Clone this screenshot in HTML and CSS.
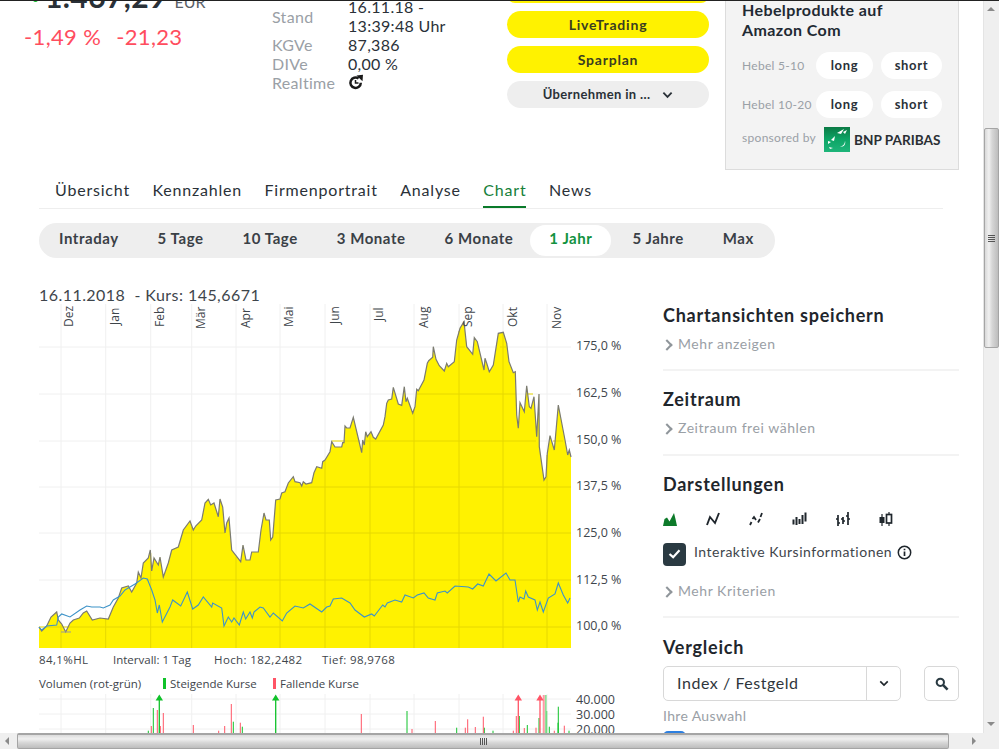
FILE: index.html
```html
<!DOCTYPE html>
<html lang="de">
<head>
<meta charset="utf-8">
<title>Amazon Com Chart</title>
<link rel="stylesheet" href="styles.css">
</head>
<body>
<div class="window">
  <div class="viewport">
    <main class="page">
      <section class="top">
        <div class="quote">
          <div class="price"><span class="dot"></span><b>1.467,29</b> <span class="cur">EUR</span></div>
          <div class="change"><span>-1,49 %</span><span>-21,23</span></div>
        </div>
        <dl class="facts">
          <dt>Stand</dt><dd>16.11.18 -<br>13:39:48 Uhr</dd>
          <dt>KGVe</dt><dd>87,386</dd>
          <dt>DIVe</dt><dd>0,00 %</dd>
          <dt>Realtime</dt>
          <dd><svg class="rt" viewBox="0 0 16 16" width="16" height="16"><path d="M12.800 8.800a5.200 5.200 0 1 1-2.200-4.300" fill="none" stroke="#1a1a1a" stroke-width="2.500"/><path d="M8.500 1.500 15 .8l-.5 6.500z" fill="#1a1a1a"/><path d="M7.500 6v3h3" fill="none" stroke="#1a1a1a" stroke-width="1.500"/></svg></dd>
        </dl>
        <div class="actions">
          <a class="btn yellow clipped"></a>
          <a class="btn yellow">LiveTrading</a>
          <a class="btn yellow">Sparplan</a>
          <a class="btn grey">Übernehmen in ...<svg class="chev" viewBox="0 0 12 8" width="11" height="8"><path d="M1.500 1.500 6 6l4.500-4.500" fill="none" stroke="#2a3138" stroke-width="2"/></svg></a>
        </div>
        <aside class="lever">
          <h3>Hebelprodukte auf<br>Amazon Com</h3>
          <div class="lrow"><span class="ll">Hebel 5-10</span><a class="pill pl">long</a><a class="pill ps">short</a></div>
          <div class="lrow"><span class="ll">Hebel 10-20</span><a class="pill pl">long</a><a class="pill ps">short</a></div>
          <div class="spons"><span class="ll">sponsored by</span>
            <svg class="bnp" viewBox="0 0 26 25" width="26" height="25"><defs><linearGradient id="bg" x1="0" y1="0" x2="0" y2="1"><stop offset="0" stop-color="#0b7a45"/><stop offset=".5" stop-color="#0da566"/><stop offset="1" stop-color="#1fb57a"/></linearGradient></defs><rect width="26" height="25" fill="url(#bg)"/><path d="M13 6l7-4-3 5zM19 5l4-2-2 4zM7 13l4-4-1 5zM5 20l4 1-3 1zM4 14l3 1-3 2zM16 20c3-1 5-3 5-6 1 3-1 6-5 6z" fill="#fff"/></svg>
            <b class="bnpt">BNP PARIBAS</b></div>
        </aside>
      </section>

      <nav class="tabs">
        <a>Übersicht</a><a>Kennzahlen</a><a>Firmenportrait</a><a>Analyse</a><a class="on">Chart</a><a>News</a>
      </nav>

      <div class="ranges">
        <a>Intraday</a><a>5 Tage</a><a>10 Tage</a><a>3 Monate</a><a>6 Monate</a><a class="on">1 Jahr</a><a>5 Jahre</a><a>Max</a>
      </div>

      <section class="cols">
        <div class="chartcol">
          <div class="kurs">16.11.2018&nbsp; - Kurs: 145,6671</div>
          <svg class="chart" viewBox="30 304 600 445" width="600" height="445">
            <g class="grid">
              <path d="M61 304V648M105.700 304V648M150.700 304V648M191.700 304V648M236 304V648M280 304V648M325 304V648M370 304V648M414 304V648M459 304V648M503 304V648M547 304V648"/>
              <path d="M39 347H571M39 394H571M39 441H571M39 487H571M39 533H571M39 580H571M39 627H571"/>
            </g>
            <polygon class="area" points="39,648 39,627 41.7,631 46.7,626 51,617 56.7,612 58.300,620 61.700,624 65.700,632 70,623 73.300,620 79.300,618 83.300,613 86.700,611 92.300,620 100,618 108.300,619 113.300,607 118.300,598 121.700,588 128.300,586 131.700,592 136.700,583 138.300,572 141,578 143.300,563 148.300,558 150.300,550 151.700,571 154,558 158.300,565 160,557 163.300,577 168.300,563 171.700,550 178.300,547 183.300,530 190,521 193.300,530 195.700,526 201.700,520 205,503 208.300,499.300 210.700,505 214,503 218.300,516.700 220,499 222.700,507 225,533 226.700,523 229,518 231.700,550 240.700,561.700 243,545 246,560 250,560 251.700,552 258.300,552 261,530 264,513 266,520 269.300,520 270.700,540 272.700,537 273.300,530 275.700,500 280,499 281.700,493 285,491.700 288.300,483 293.300,476.700 295,481.700 300,482.700 301.700,486 303.300,481.700 306,484 311.700,482.700 314,472.700 316.700,466.700 321.700,468.300 322.700,461.700 325,460 330,451.700 331.700,441.700 335,447 341.700,447 342.700,442.700 344,442.700 345,426 346.700,428 350,428 353.300,417.300 361.700,452.700 362.700,440 364.300,445 365.700,431.700 367.300,436.700 371,431.700 373.300,437.300 375.700,439 383.300,425 385,416.700 386.700,403.300 388.300,400 391.700,399 393.300,387.300 398.300,404 401.700,405.300 404.300,386.700 406,401.700 407.300,398.300 412.700,413.300 415,406.700 416.700,389.300 418.300,390.700 424,380 427.300,363.300 428.700,360.700 432.700,357.300 433.300,346.700 436,359.300 439.300,365.700 444.300,371 446.700,363.300 448.300,366.700 454.300,361.700 456.700,340 460,328.300 464,321.700 466.700,346.700 472.700,354.300 474.300,337.700 477.300,341.700 484,370 485,358.300 486.700,363.300 489.300,371.700 493.300,365 498.300,333.300 503.300,332.300 506.700,343.300 509,361.700 513.300,372.700 515.300,371.700 516.700,415 518.300,428.300 520,402.700 524.300,411.700 526.700,385.700 529.300,406.700 531,408.300 534,396.700 536.700,436.700 539,394 539.300,446.700 544,480 546,476.700 547.300,453.300 550,435.700 554.300,450 558.300,405 565,440 567.700,455 569.300,450 571,457 571,648"/>
            <g class="over">
              <path d="M61 625V648M105.700 619V648M150.700 553V648M191.700 527V648M236 557V648M280 500V648M325 461V648M370 433V648M414 409V648M459 331V648M503 333V648M547 455V648"/>
              <path d="M458 347H465M500 347H506M393 394H394M417 394H516M527 394H533M332 441H360M366 441H536M553 441H563M288 487H571M183 533H225M273 533H571M146 580H571M39 627H571"/>
            </g>
            <polyline class="price-line" points="39,627 41.7,631 46.7,626 51,617 56.7,612 58.300,620 61.700,624 65.700,632 70,623 73.300,620 79.300,618 83.300,613 86.700,611 92.300,620 100,618 108.300,619 113.300,607 118.300,598 121.700,588 128.300,586 131.700,592 136.700,583 138.300,572 141,578 143.300,563 148.300,558 150.300,550 151.700,571 154,558 158.300,565 160,557 163.300,577 168.300,563 171.700,550 178.300,547 183.300,530 190,521 193.300,530 195.700,526 201.700,520 205,503 208.300,499.300 210.700,505 214,503 218.300,516.700 220,499 222.700,507 225,533 226.700,523 229,518 231.700,550 240.700,561.700 243,545 246,560 250,560 251.700,552 258.300,552 261,530 264,513 266,520 269.300,520 270.700,540 272.700,537 273.300,530 275.700,500 280,499 281.700,493 285,491.700 288.300,483 293.300,476.700 295,481.700 300,482.700 301.700,486 303.300,481.700 306,484 311.700,482.700 314,472.700 316.700,466.700 321.700,468.300 322.700,461.700 325,460 330,451.700 331.700,441.700 335,447 341.700,447 342.700,442.700 344,442.700 345,426 346.700,428 350,428 353.300,417.300 361.700,452.700 362.700,440 364.300,445 365.700,431.700 367.300,436.700 371,431.700 373.300,437.300 375.700,439 383.300,425 385,416.700 386.700,403.300 388.300,400 391.700,399 393.300,387.300 398.300,404 401.700,405.300 404.300,386.700 406,401.700 407.300,398.300 412.700,413.300 415,406.700 416.700,389.300 418.300,390.700 424,380 427.300,363.300 428.700,360.700 432.700,357.300 433.300,346.700 436,359.300 439.300,365.700 444.300,371 446.700,363.300 448.300,366.700 454.300,361.700 456.700,340 460,328.300 464,321.700 466.700,346.700 472.700,354.300 474.300,337.700 477.300,341.700 484,370 485,358.300 486.700,363.300 489.300,371.700 493.300,365 498.300,333.300 503.300,332.300 506.700,343.300 509,361.700 513.300,372.700 515.300,371.700 516.700,415 518.300,428.300 520,402.700 524.300,411.700 526.700,385.700 529.300,406.700 531,408.300 534,396.700 536.700,436.700 539,394 539.300,446.700 544,480 546,476.700 547.300,453.300 550,435.700 554.300,450 558.300,405 565,440 567.700,455 569.300,450 571,457"/>
            <path class="low" d="M61 632H71"/>
            <polyline class="cmp" points="39,627 41.700,630 46.700,626 56.700,625 58.300,617 61.700,614 70,617 80,610 86.700,606 91.700,607 100,607 103.300,608 110,605 113.300,600 120,596 125,590 135,584 143.300,578 147.300,579 151.700,590 155,600 157.300,613 159.300,605 162.300,622 170,607 172.700,600 180.700,606 187.300,592 192.700,609 198.300,605 203.300,597 211.700,607 212.700,603 221.700,608 224,626 228.300,617 231.700,622 234,618 239.300,625 243.300,612 245.700,619 250,612 252.300,618 254,612 260,607 263.300,608 270,617 273.300,613 282.300,621 286.700,613 295,606 303.300,608 310,604 321.700,612 326.700,607 330,606 333.300,599 341.700,598 350,603 355,610 364.300,617 371.700,614 374.300,616 382.700,605 385,607 387.300,603 395,600 401.700,602 405,595 413.300,598 417.300,595 424,593 428.300,598 435,600 437.300,593 445,591 447.300,593 455,586 468.300,587 472.700,589 477.700,584 483.300,586 489,574 496,581 506,573 510,580 515,580 518.300,602 520,597 524,599 525.700,591 528.300,597 535,600 537.300,610 540,602 543.300,612 548.300,598 555,594 558.300,583 563.300,595 567.700,603 570,598"/>
            <g class="grid"><path d="M39 699H571M39 714H571M39 729H571"/><path d="M61 694V733M105.700 694V733M150.700 694V733M191.700 694V733M236 694V733M280 694V733M325 694V733M370 694V733M414 694V733M459 694V733M503 694V733M547 694V733"/></g>
            <g class="vols">
              <path class="g" d="M148.300 733V730.700M153.300 733V708M233.300 733V721.700M242.300 733V726.700M407 733V711M456.700 733V727.700M484.300 733V727.700M493 733V730.700M519.300 733V716M527.300 733V725M539 733V718M546.700 733V711M549.300 733V726.700M558 733V722.700M558.300 733V706.700M569 733V730.700"/>
              <path class="r" d="M151.300 733V726M157.300 733V710M160.300 733V726M163.300 733V713M193.300 733V725M218.700 733V730.700M224.700 733V726M231.300 733V704M240.300 733V722.700M361.300 733V714M412 733V729M435.300 733V721M465.300 733V727.700M467.700 733V719.300M475.300 733V727M483.300 733V716.700M513.300 733V730.700M516.300 733V716M524.300 733V728M536 733V727.700M554.300 733V730.700M564.300 733V725.700"/>
              <path class="gl" d="M159.300 733V698M275.700 733V698"/>
              <path class="rl" d="M518.300 733V698M540 733V698"/>
              <path class="gf" d="M545.700 733V695"/>
              <path class="rf" d="M543.700 733V695"/>
              <path class="ga" d="M159.300 694.500l3.700 6h-7.400zM275.700 694.500l3.700 6h-7.400z"/>
              <path class="ra" d="M518.300 694.500l3.700 6h-7.400zM540 694.500l3.700 6h-7.400z"/>
            </g>
            <g class="months">
              <text transform="translate(73,327) rotate(-90)">Dez</text>
              <text transform="translate(119,325) rotate(-90)">Jan</text>
              <text transform="translate(164,327) rotate(-90)">Feb</text>
              <text transform="translate(205,329) rotate(-90)">Mär</text>
              <text transform="translate(250,328) rotate(-90)">Apr</text>
              <text transform="translate(293,327) rotate(-90)">Mai</text>
              <text transform="translate(339,324) rotate(-90)">Jun</text>
              <text transform="translate(383,321) rotate(-90)">Jul</text>
              <text transform="translate(428,328) rotate(-90)">Aug</text>
              <text transform="translate(472,327) rotate(-90)">Sep</text>
              <text transform="translate(517,327) rotate(-90)">Okt</text>
              <text transform="translate(561,329) rotate(-90)">Nov</text>
            </g>
            <g class="yl">
              <text x="576" y="350">175,0 %</text><text x="576" y="397">162,5 %</text><text x="576" y="444">150,0 %</text><text x="576" y="490">137,5 %</text><text x="576" y="537">125,0 %</text><text x="576" y="584">112,5 %</text><text x="576" y="630">100,0 %</text>
              <text class="vl" x="576" y="703">40.000</text><text class="vl" x="576" y="718">30.000</text><text class="vl" x="576" y="733">20.000</text>
            </g>
            <g class="info">
              <text class="num" x="39" y="664">84,1%HL</text><text x="113" y="664">Intervall: 1 Tag</text><text class="num" x="214" y="664">Hoch: 182,2482</text><text class="num" x="322" y="664">Tief: 98,9768</text>
              <text x="39" y="688">Volumen (rot-grün)</text><text x="170" y="688">Steigende Kurse</text><text x="280" y="688">Fallende Kurse</text>
            </g>
            <rect class="lg" x="163" y="678" width="3" height="11"/><rect class="lr" x="273" y="678" width="3" height="11"/>
          </svg>
        </div>

        <div class="side">
          <section class="block first">
            <h2>Chartansichten speichern</h2>
            <a class="more">Mehr anzeigen</a>
          </section>
          <section class="block">
            <h2>Zeitraum</h2>
            <a class="more">Zeitraum frei wählen</a>
          </section>
          <section class="block darst">
            <h2>Darstellungen</h2>
            <div class="icons">
              <svg viewBox="0 0 14 14" width="14" height="14"><path d="M0 14 1.500 7 4 5.500 6.500 9.500 11 1l1.500 6L14 14z" fill="#0d7a2a"/></svg>
              <svg viewBox="0 0 14 14" width="14" height="14"><path d="M1 13 4 5l5 6 4-10" fill="none" stroke="#1f262c" stroke-width="1.900"/></svg>
              <svg viewBox="0 0 14 14" width="14" height="14"><path d="M1 13l1.500-3M3.500 7 5 5l2 3M9 10.500 11 7M11.500 5 13 1" fill="none" stroke="#1f262c" stroke-width="1.800"/></svg>
              <svg viewBox="0 0 15 14" width="15" height="14"><path d="M1.500 7.500v5M4.500 5v8M7.500 7v5M10.500 3v9M13.500 .5v9" fill="none" stroke="#1f262c" stroke-width="2"/></svg>
              <svg viewBox="0 0 14 14" width="14" height="14"><path d="M2 3v11M7 5v7M12 0v13M0 7h2M2 11h2M5 7h2M7 9h2M10 4h2M12 7h2" fill="none" stroke="#1f262c" stroke-width="1.700"/></svg>
              <svg viewBox="0 0 14 14" width="14" height="14"><path d="M3 2v12M10 0v14" stroke="#1f262c" stroke-width="1.200"/><rect x=".5" y="5" width="5" height="6" fill="#1f262c"/><rect x="7.500" y="2.500" width="5" height="8.500" fill="#fff" stroke="#1f262c" stroke-width="1.700"/></svg>
            </div>
            <div class="check">
              <span class="box"><svg viewBox="0 0 14 11" width="13" height="10"><path d="M1.500 5.500 5.500 9 12.500 1.500" fill="none" stroke="#fff" stroke-width="2.400"/></svg></span>
              <span class="cl">Interaktive Kursinformationen</span>
              <svg class="i" viewBox="0 0 15 15" width="15" height="15"><circle cx="7.500" cy="7.500" r="6.200" fill="none" stroke="#1f262c" stroke-width="1.500"/><path d="M7.500 6.500v4.500M7.500 3.800v1.500" stroke="#1f262c" stroke-width="1.700"/></svg>
            </div>
            <a class="more">Mehr Kriterien</a>
          </section>
          <section class="block last">
            <h2>Vergleich</h2>
            <div class="compare">
              <div class="select"><span class="sv">Index / Festgeld</span><span class="sa"><svg viewBox="0 0 12 8" width="10" height="7"><path d="M1.500 1.500 6 6l4.500-4.500" fill="none" stroke="#1f262c" stroke-width="2"/></svg></span></div>
              <button class="search" aria-label="Suche"><svg viewBox="0 0 15 15" width="14" height="14"><circle cx="5.700" cy="5.700" r="3.900" fill="none" stroke="#2a3a42" stroke-width="2.200"/><path d="M8.500 8.500 13.500 13.500" stroke="#2a3a42" stroke-width="2.800"/></svg></button>
            </div>
            <div class="ihre">Ihre Auswahl</div>
            <span class="tog"></span>
          </section>
        </div>
      </section>
    </main>
  </div>
  <div class="vbar">
    <span class="arr up"></span>
    <div class="vtrack"><span class="vthumb"><i></i><i></i><i></i><i></i></span></div>
    <span class="arr down"></span>
  </div>
  <div class="hbar">
    <span class="harr left"></span>
    <div class="htrack"><span class="hthumb"><i></i><i></i><i></i><i></i></span></div>
    <span class="harr right"></span>
  </div>
  <div class="corner"></div>
</div>
</body>
</html>
```
FILE: styles.css
```css
* { box-sizing: border-box; }
html, body { margin: 0; height: 100%; overflow: hidden; background: #fff; }
body { font-family: Lato, "Liberation Sans", sans-serif; color: #2a3138; }
a { display: block; }

.window {
  width: 999px; height: 749px;
  display: grid;
  grid-template-columns: 983px 16px;
  grid-template-rows: 732px 16px;
  border-top: 1px solid #222;
  overflow: hidden;
}
.viewport { overflow: hidden; background: #fff; }
.page { margin-top: -40px; padding-left: 24px; width: 983px; }

.top { display: grid; grid-template-columns: 248px 235px 202px 234px; height: 206px; }
.quote { padding-top: 20px; }
.price { height: 27px; font-size: 30px; line-height: 30px; color: #2a3138; white-space: nowrap; }
.price b { font-weight: 700; letter-spacing: .4px; }
.price .cur { font-size: 16px; color: #5a6168; }
.dot { display: inline-block; width: 5px; height: 5px; margin: 0 7px 0 9px; border-radius: 50%; background: #10c22a; vertical-align: 6px; }
.change { margin-top: 16px; display: flex; gap: 15px; font-size: 22px; line-height: 26px; color: #ff4d5e; letter-spacing: .35px; }

.facts { margin: 0; padding: 36px 0 0 0; display: grid; grid-template-columns: 76px 1fr; font-size: 16px; line-height: 19px; letter-spacing: .3px; align-content: start; }
.facts dt { color: #9aa0a6; align-self: center; }
.facts dd { margin: 0; line-height: 19px; }
.rt { display: block; margin-top: 1px; }

.actions { display: flex; flex-direction: column; gap: 8px; margin-top: 13px; width: 202px; }
.btn { height: 27px; border-radius: 14px; text-align: center; font-size: 14px; font-weight: 700; line-height: 27px; letter-spacing: .8px; }
.clipped { height: 8px; border-radius: 0 0 14px 14px; margin-top: 21px; }
.yellow { background: #fff200; color: #3a3d20; }
.grey { background: #eeeeee; color: #2a3138; display: flex; justify-content: center; align-items: center; gap: 12px; font-size: 13px; letter-spacing: .35px; }

.lever { margin-left: 16px; width: 234px; height: 170px; margin-top: 39px; background: #f3f3f3; border: 1px solid #dcdcdc; border-top: 0; padding: 0 16px; }
.lever h3 { margin: 0; font-size: 16px; line-height: 20px; font-weight: 700; letter-spacing: .4px; color: #1f2a33; }
.lrow { display: flex; align-items: center; margin-top: 12px; height: 27px; }
.lrow + .lrow { margin-top: 12px; }
.ll { font-size: 12px; color: #9aa0a6; letter-spacing: .3px; white-space: nowrap; }
.lrow .ll { width: 74px; }
.pill { background: #fff; border-radius: 14px; height: 27px; line-height: 27px; text-align: center; font-size: 13px; font-weight: 700; letter-spacing: .7px; color: #2a3138; }
.pl { width: 57px; margin-right: 8px; }
.ps { width: 61px; }
.spons { display: flex; align-items: center; margin-top: 9px; width: 202px; }
.spons .ll { position: relative; top: -2px; flex: none; }
.bnp { margin-left: 8px; flex: none; }
.bnpt { font-size: 13.600px; margin-left: 4px; color: #2a2f33; white-space: nowrap; flex: none; }

.tabs { margin-left: 15px; width: 904px; height: 42px; display: flex; gap: 22.500px; border-bottom: 1px solid #eee; padding: 13px 0 0 16px; font-size: 16px; line-height: 20px; letter-spacing: .8px; }
.tabs a { height: 28px; }
.tabs .on { color: #16803a; border-bottom: 2px solid #0a7a2a; }

.ranges { margin: 14px 0 0 15px; width: 736px; height: 35px; border-radius: 18px; background: #eeeeee; display: flex; align-items: center; padding: 0 2px; font-size: 15px; font-weight: 700; letter-spacing: .55px; color: #3a4046; }
.ranges a { height: 31px; line-height: 27px; padding: 0 18px; white-space: nowrap; margin-right: 3px; }
.ranges .on { background: #fff; border-radius: 16px; color: #12923f; margin-left: -4px; padding: 0 19px; }

.cols { display: flex; margin-top: 27px; }
.chartcol { width: 600px; margin-left: 6px; flex: none; }
.kurs { margin-left: 9px; height: 19px; font-size: 16px; line-height: 20px; letter-spacing: .45px; color: #3e454b; }
.chart { display: block; }
.grid path { stroke: #f0f0f0; stroke-width: 1; fill: none; }
.area { fill: #fff200; }
.over path { stroke: #e6d800; stroke-width: 1; fill: none; }
.price-line { fill: none; stroke: #7b7b70; stroke-width: 1.200; }
.cmp { fill: none; stroke: #3d93c8; stroke-width: 1.100; }
.low { stroke: #999; stroke-width: 1; }
.vols path { fill: none; stroke-width: 1; }
.vols .g { stroke: #10c22a; }
.vols .r { stroke: #ff5466; }
.vols .gl { stroke: #10c22a; stroke-width: 1.300; }
.vols .rl { stroke: #ff5466; stroke-width: 1.300; }
.vols .gf { stroke: #8fe09a; stroke-width: 2; }
.vols .rf { stroke: #ff9aa5; stroke-width: 2; }
.vols .ga { fill: #10c22a; stroke: none; }
.vols .ra { fill: #ff5466; stroke: none; }
.lg { fill: #10c22a; }
.lr { fill: #ff5466; }
.months text { font-family: "Open Sans", "Liberation Sans", sans-serif; font-size: 12px; fill: #3e454b; }
.yl text { font-family: "Open Sans", "Liberation Sans", sans-serif; font-size: 12.500px; fill: #3e454b; }
.yl .vl { transform: translateY(1px); }
.info text { font-family: "Open Sans", "Liberation Sans", sans-serif; font-size: 11.500px; fill: #3e454b; }
.info .num { letter-spacing: .4px; }

.side { width: 296px; margin-left: 33px; padding-top: 19px; flex: none; }
.block { border-bottom: 2px solid #f3f3f3; height: 85px; padding-top: 17px; }
.block h2 { margin: 0; font-size: 18px; line-height: 22px; font-weight: 700; letter-spacing: .75px; color: #1f262c; }
.first { height: 67px; padding-top: 0; }
.more { margin-top: 9px; font-size: 14px; line-height: 18px; color: #9aa0a6; letter-spacing: .55px; padding-left: 15px; position: relative; }
.more::before { content: ""; position: absolute; left: 0; top: 6px; width: 6px; height: 6px; border-top: 2px solid #8f959a; border-right: 2px solid #8f959a; transform: rotate(45deg); }
.darst { height: 162px; }
.icons { display: flex; gap: 29px; margin-top: 17px; height: 14px; }
.icons svg { flex: none; }
.check { display: flex; align-items: center; margin-top: 16px; height: 24px; }
.box { width: 23px; height: 23px; border-radius: 4px; background: #2a3a42; display: flex; align-items: center; justify-content: center; flex: none; }
.cl { margin-left: 8px; font-size: 14px; letter-spacing: .5px; color: #3e454b; position: relative; top: -3px; }
.i { margin-left: 5px; position: relative; top: -2px; }
.check + .more { margin-top: 16px; }
.last { border-bottom: 0; height: auto; padding-top: 18px; }
.compare { display: flex; margin-top: 8px; }
.select { width: 238px; height: 35px; border: 1px solid #d8d8d8; border-radius: 5px; display: flex; align-items: center; }
.sv { flex: 1; padding: 0 0 2px 13px; font-size: 16px; letter-spacing: .55px; color: #2f363c; }
.sa { width: 34px; height: 33px; border-left: 1px solid #d8d8d8; display: flex; align-items: center; justify-content: center; }
.search { margin-left: 23px; width: 35px; height: 35px; border: 1px solid #d8d8d8; border-radius: 5px; background: #fff; padding: 0; display: flex; align-items: center; justify-content: center; }
.ihre { margin-top: 6px; font-size: 14px; line-height: 18px; letter-spacing: .35px; color: #9aa0a6; }
.tog { display: block; width: 23px; height: 20px; margin-top: 6px; border-radius: 5px; background: #2d7fe0; }

.vbar { grid-column: 2; grid-row: 1; background: #efefef; display: flex; flex-direction: column; border-left: 1px solid #e4e4e4; }
.arr { height: 17px; flex: none; position: relative; }
.arr::after { content: ""; position: absolute; left: 3px; border-left: 4px solid transparent; border-right: 4px solid transparent; }
.up::after { top: 6px; border-bottom: 4px solid #8a8a8a; }
.down::after { top: 6px; border-top: 4px solid #8a8a8a; }
.vtrack { flex: 1; padding-top: 110px; }
.vthumb { display: flex; flex-direction: column; align-items: center; justify-content: center; gap: 1px; height: 220px; border: 1px solid #a5a5a5; border-radius: 2px; background: linear-gradient(90deg, #d8d8d8, #f0f0f0 30%, #d6d6d6 55%, #bdbdbd); }
.vthumb i { width: 7px; height: 1px; background: #555; }

.hbar { grid-column: 1; grid-row: 2; display: flex; background: #efefef; }
.harr { width: 17px; flex: none; position: relative; }
.harr::after { content: ""; position: absolute; top: 4px; border-top: 4px solid transparent; border-bottom: 4px solid transparent; }
.left::after { left: 5px; border-right: 4px solid #8a8a8a; }
.right::after { left: 6px; border-left: 4px solid #8a8a8a; }
.htrack { flex: 1; }
.hthumb { display: flex; height: 16px; width: 932px; align-items: center; justify-content: center; gap: 1px; border: 1px solid #a5a5a5; border-top-width: 2px; border-radius: 2px; background: linear-gradient(180deg, #dcdcdc, #f0f0f0 30%, #d6d6d6 60%, #bdbdbd); }
.hthumb i { width: 1px; height: 7px; background: #555; }
.corner { grid-column: 2; grid-row: 2; background: #efefef; }
```
